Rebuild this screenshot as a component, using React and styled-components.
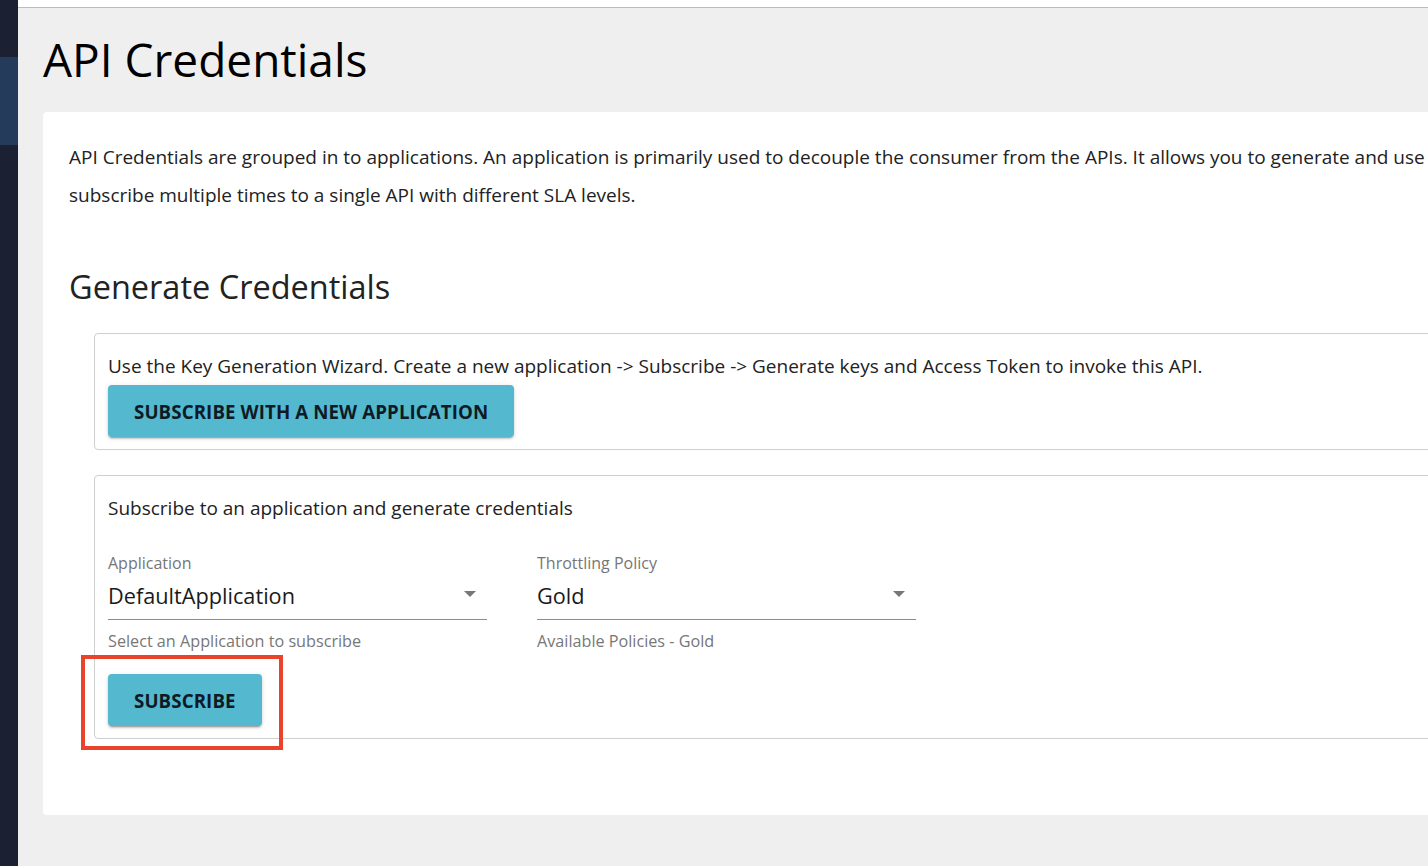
import React from 'react';
import styled, { createGlobalStyle } from 'styled-components';

const GlobalStyle = createGlobalStyle`
  html, body {
    margin: 0;
    padding: 0;
    background: #efefef;
    overflow: hidden;
  }
  body {
    font-family: "Open Sans", "Liberation Sans", sans-serif;
    color: #222;
  }
`;

const Layout = styled.div`
  display: flex;
  width: 1428px;
  height: 866px;
  overflow: hidden;
`;

const Sidebar = styled.div`
  flex: 0 0 18px;
  background-color: #1b2133;
  padding-top: 57px;
  box-sizing: border-box;
`;

const SidebarActive = styled.div`
  height: 88px;
  background-color: #243b5b;
`;

const Main = styled.div`
  flex: 1;
  min-width: 0;
  display: flex;
  flex-direction: column;
  overflow: hidden;
`;

const TopBar = styled.div`
  height: 7px;
  background: #fff;
  border-bottom: 1px solid #bcbcbc;
  flex-shrink: 0;
`;

const Content = styled.div`
  padding-left: 25px;
`;

const Title = styled.h1`
  margin: 22px 0 24px;
  font-size: 46px;
  line-height: 58px;
  font-weight: 400;
  color: #000;
`;

const Paper = styled.div`
  width: 1900px;
  background: #fff;
  border-radius: 4px;
  padding: 26px 25px 76px 26px;
  box-sizing: border-box;
`;

const Intro = styled.p`
  margin: 0;
  font-size: 19px;
  line-height: 38px;
  color: #222;
`;

const Heading = styled.h2`
  margin: 52px 0 25px;
  font-size: 32.5px;
  line-height: 42px;
  font-weight: 400;
  color: #222;
`;

const Boxes = styled.div`
  margin-left: 25px;
  display: flex;
  flex-direction: column;
  gap: 25px;
`;

const OptionBox = styled.div`
  border: 1px solid #cfcfcf;
  border-radius: 4px;
  padding: 19px 13px ${({ bottom }) => bottom}px;
`;

const BoxText = styled.div`
  font-size: 19px;
  line-height: 27px;
  color: #222;
`;

const Button = styled.button`
  display: inline-flex;
  align-items: center;
  justify-content: center;
  height: 52px;
  padding: 0 26px;
  border: none;
  border-radius: 4px;
  background-color: #54b8cf;
  color: #0e1b25;
  font-family: "Open Sans", "Liberation Sans", sans-serif;
  font-size: 18.7px;
  font-weight: 700;
  letter-spacing: 0.1px;
  text-transform: uppercase;
  box-shadow: 0 3px 1px -2px rgba(0, 0, 0, 0.2), 0 2px 2px 0 rgba(0, 0, 0, 0.14),
    0 1px 5px 0 rgba(0, 0, 0, 0.12);
  cursor: pointer;
`;

const ButtonRow = styled.div`
  margin-top: ${({ top }) => top}px;
  display: flex;
`;

const Highlighted = styled.div`
  position: relative;
  display: inline-flex;

  &::after {
    content: '';
    position: absolute;
    left: -27px;
    top: -19px;
    right: -21px;
    bottom: -24px;
    border: 4px solid #e9432b;
    pointer-events: none;
  }
`;

const Fields = styled.div`
  display: flex;
  gap: 50px;
  margin-top: 29px;
`;

const Field = styled.div`
  width: 379px;
  display: flex;
  flex-direction: column;
`;

const Label = styled.label`
  font-size: 16px;
  line-height: 24px;
  color: #767676;
`;

const SelectBox = styled.div`
  margin-top: 8px;
  position: relative;
  display: flex;
  align-items: center;
  padding-bottom: 10px;
  border-bottom: 1px solid #8c8c8c;
  font-size: 21.7px;
  line-height: 26px;
  color: #1a1a1a;
`;

const Arrow = styled.span`
  position: absolute;
  right: 11px;
  top: 8px;
  width: 0;
  height: 0;
  border-left: 6px solid transparent;
  border-right: 6px solid transparent;
  border-top: 6px solid #777;
`;

const Helper = styled.div`
  margin-top: 9px;
  font-size: 16.2px;
  line-height: 24px;
  color: #777;
`;

const SelectField = ({ label, value, helper }) => (
  <Field>
    <Label>{label}</Label>
    <SelectBox>
      {value}
      <Arrow />
    </SelectBox>
    <Helper>{helper}</Helper>
  </Field>
);

const App = () => (
  <>
    <GlobalStyle />
    <Layout>
      <Sidebar>
        <SidebarActive />
      </Sidebar>
      <Main>
        <TopBar />
        <Content>
          <Title>API Credentials</Title>
          <Paper>
            <Intro>
              API Credentials are grouped in to applications. An application is primarily used to
              decouple the consumer from the APIs. It allows you to generate and use a single key for
              multiple APIs and
              <br />
              subscribe multiple times to a single API with different SLA levels.
            </Intro>
            <Heading>Generate Credentials</Heading>
            <Boxes>
              <OptionBox bottom={12}>
                <BoxText>
                  Use the Key Generation Wizard. Create a new application -&gt; Subscribe -&gt;
                  Generate keys and Access Token to invoke this API.
                </BoxText>
                <ButtonRow top={5}>
                  <Button>Subscribe with a new application</Button>
                </ButtonRow>
              </OptionBox>
              <OptionBox bottom={12}>
                <BoxText>Subscribe to an application and generate credentials</BoxText>
                <Fields>
                  <SelectField
                    label="Application"
                    value="DefaultApplication"
                    helper="Select an Application to subscribe"
                  />
                  <SelectField
                    label="Throttling Policy"
                    value="Gold"
                    helper="Available Policies - Gold"
                  />
                </Fields>
                <ButtonRow top={21}>
                  <Highlighted>
                    <Button>Subscribe</Button>
                  </Highlighted>
                </ButtonRow>
              </OptionBox>
            </Boxes>
          </Paper>
        </Content>
      </Main>
    </Layout>
  </>
);

export default App;
